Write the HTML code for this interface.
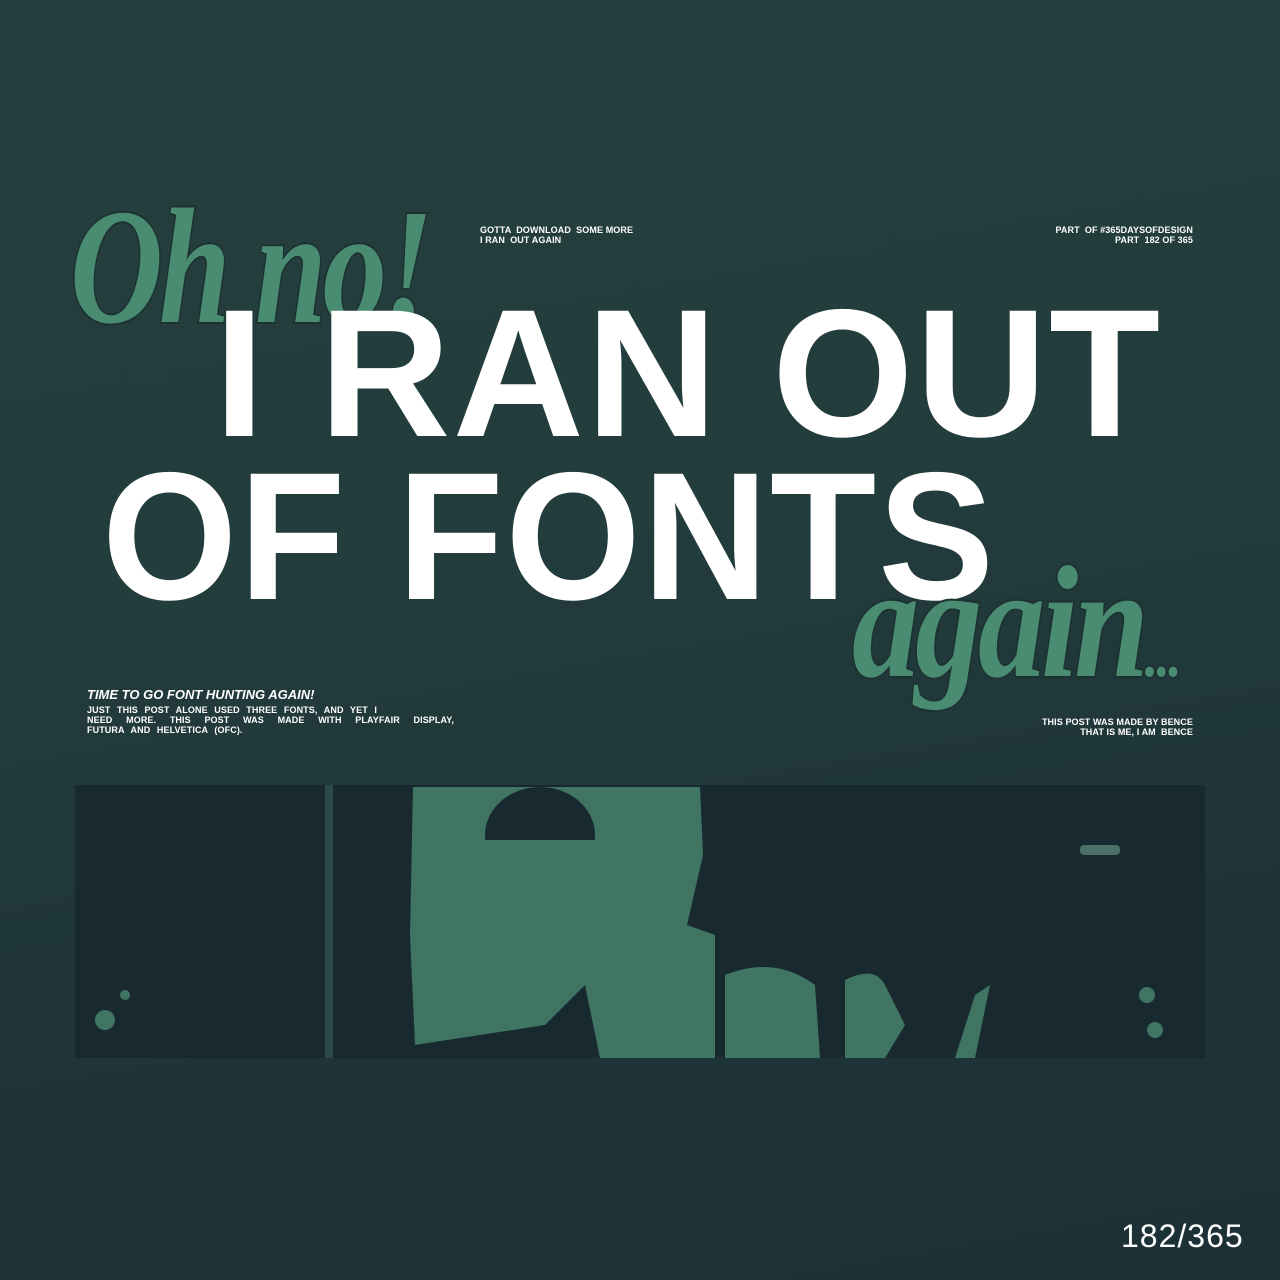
<!DOCTYPE html>
<html><head><meta charset="utf-8"><style>
body{margin:0;width:1280px;height:1280px;overflow:hidden;background:linear-gradient(170deg,#243f3e 0%,#233c3c 40%,#1f3438 75%,#1c3035 100%);position:relative;font-family:"Liberation Sans",sans-serif;color:#fff}
.a{position:absolute;white-space:nowrap}
.sm{font-size:9px;font-weight:bold;line-height:10px;letter-spacing:0.1px}
.big{font-weight:bold;font-size:182px;line-height:1;letter-spacing:2px}
.sc{font-family:"Liberation Serif",serif;font-style:italic;font-weight:bold;color:#4a8c72;-webkit-text-stroke:4px #1d3333;paint-order:stroke fill;letter-spacing:-5px}
</style></head><body>
<div class="a sc" style="left:70px;top:172px;font-size:165px;transform:scaleX(0.78);transform-origin:left">Oh no!</div>
<div class="a big" style="left:214px;top:282px">I RAN OUT</div>
<div class="a big" style="left:102px;top:445px;transform:scaleX(0.955);transform-origin:left">OF FONTS</div>
<div class="a sc" style="left:852px;top:530px;font-size:160px;transform:scaleX(0.84);transform-origin:left">again<span style="font-size:64px;letter-spacing:-2px">...</span></div>
<div class="a sm" style="left:480px;top:225px">GOTTA &nbsp;DOWNLOAD &nbsp;SOME MORE<br>I RAN &nbsp;OUT AGAIN</div>
<div class="a sm" style="right:87px;top:225px;text-align:right">PART &nbsp;OF #365DAYSOFDESIGN<br>PART &nbsp;182 OF 365</div>
<div class="a" style="left:87px;top:687px;font-size:13px;font-weight:bold;font-style:italic">TIME TO GO FONT HUNTING AGAIN!</div>
<div class="a sm" style="left:87px;top:705px;width:367px;white-space:normal;text-align:justify;text-align-last:left;word-spacing:4px">JUST THIS POST ALONE USED THREE FONTS, AND YET I<br><span style="display:block;text-align-last:justify">NEED MORE. THIS POST WAS MADE WITH PLAYFAIR DISPLAY,</span>FUTURA AND HELVETICA (OFC).</div>
<div class="a sm" style="right:87px;top:717px;text-align:right">THIS POST WAS MADE BY BENCE<br>THAT IS ME, I AM &nbsp;BENCE</div>
<svg class="a" style="left:75px;top:785px" width="1130" height="273" viewBox="0 0 1130 273">
<rect width="1130" height="273" fill="#182a30"/>
<rect x="250" y="0" width="8" height="273" fill="#2c4a48"/>
<path d="M338 2 L625 2 L628 70 L612 140 L640 150 L640 273 L525 273 L510 200 L470 240 L340 260 L335 150 Z" fill="#3f7562"/>
<ellipse cx="465" cy="50" rx="55" ry="48" fill="#182a30"/>
<rect x="410" y="55" width="110" height="45" fill="#3f7562"/>
<path d="M650 190 Q700 170 740 200 L745 273 L650 273 Z" fill="#3f7562"/>
<path d="M770 195 Q800 180 810 200 L830 240 L810 273 L770 273 Z" fill="#3f7562"/>
<path d="M900 210 L915 200 L900 273 L880 273 Z" fill="#3f7562"/>
<rect x="1005" y="60" width="40" height="10" rx="4" fill="#4a7068"/>
<circle cx="1072" cy="210" r="8" fill="#3f7562"/><circle cx="1080" cy="245" r="8" fill="#3f7562"/>
<circle cx="30" cy="235" r="10" fill="#3f7562"/><circle cx="50" cy="210" r="5" fill="#3f7562"/>
</svg>
<div class="a" style="left:1121px;top:1218px;font-size:32px;letter-spacing:1px">182/365</div>
</body></html>
